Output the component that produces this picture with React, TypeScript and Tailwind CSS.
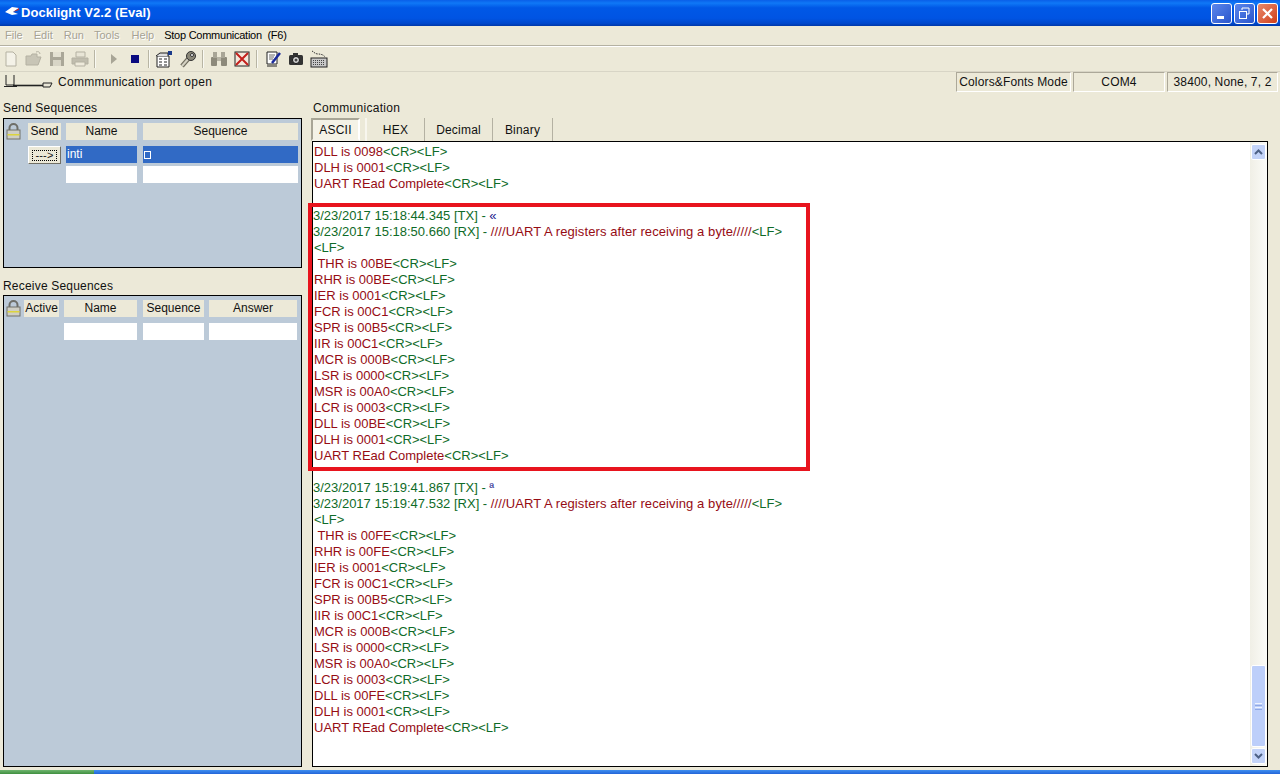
import type { ReactNode } from "react";

type Seg = { t: string; c: "r" | "w" | "g" | "t" | "b" };
const R = (t: string): Seg => ({ t, c: "r" });
const W = (t: string): Seg => ({ t, c: "w" });
const G = (t: string): Seg => ({ t, c: "g" });
const T = (t: string): Seg => ({ t, c: "t" });
const B = (t: string): Seg => ({ t, c: "b" });

const colorClass = {
  r: "text-[#960c14]",
  w: "text-[#960c14] tracking-[0.1px]",
  g: "text-[#0f6b28]",
  t: "text-[#0f6b28] -ml-px",
  b: "text-[#1a1a8c]",
};

const reg = (s: string): Seg[] => [R(s), G("<CR><LF>")];

const block = (thr: string, dll: string): Seg[][] => [
  [G("<LF>")],
  reg(` THR is ${thr}`),
  reg(`RHR is ${thr}`),
  reg("IER is 0001"),
  reg("FCR is 00C1"),
  reg("SPR is 00B5"),
  reg("IIR is 00C1"),
  reg("MCR is 000B"),
  reg("LSR is 0000"),
  reg("MSR is 00A0"),
  reg("LCR is 0003"),
  reg(`DLL is ${dll}`),
  reg("DLH is 0001"),
  reg("UART REad Complete"),
];

const log: Seg[][] = [
  reg("DLL is 0098"),
  reg("DLH is 0001"),
  reg("UART REad Complete"),
  [],
  [T("3/23/2017 15:18:44.345 [TX] - "), B("«")],
  [T("3/23/2017 15:18:50.660 [RX] - "), W("////UART A registers after receiving a byte/////"), G("<LF>")],
  ...block("00BE", "00BE"),
  [],
  [T("3/23/2017 15:19:41.867 [TX] - "), B("ª")],
  [T("3/23/2017 15:19:47.532 [RX] - "), W("////UART A registers after receiving a byte/////"), G("<LF>")],
  ...block("00FE", "00FE"),
];

function Ico({ w = 18, className = "", children }: { w?: number; className?: string; children: ReactNode }) {
  return (
    <svg width={w} height={18} viewBox={`0 0 ${w} 18`} className={`shrink-0 ${className}`}>
      {children}
    </svg>
  );
}

function ToolSep({ className = "" }: { className?: string }) {
  return <div className={`w-[2px] h-[18px] border-l border-[#b8b5a4] bg-white/70 shrink-0 ${className}`} />;
}

function Toolbar() {
  const off = "#b4b1a2";
  return (
    <div className="h-[25px] flex items-center pl-[2px] gap-[5px] shrink-0">
      <Ico>
        <path d="M4 2h7l3 3v11H4z" fill="#f4f2e8" stroke={off} />
      </Ico>
      <Ico>
        <path d="M1 15V6h5l1-2h5v3h4l-3 8z" fill="#c8c5b6" stroke={off} />
        <path d="M11 2c2-1 4 0 4 2" fill="none" stroke={off} />
      </Ico>
      <Ico>
        <rect x="2" y="2" width="14" height="14" fill="#aaa798" />
        <rect x="5" y="2" width="8" height="5" fill="#e4e1d2" />
        <rect x="5" y="10" width="8" height="6" fill="#d8d5c6" />
      </Ico>
      <Ico>
        <path d="M5 2h9v5H5z" fill="#e8e5d6" stroke={off} />
        <path d="M1 8h16v6H1z" fill="#c0bdae" stroke={off} />
        <path d="M4 12h10v4H4z" fill="#eeeadb" stroke={off} />
      </Ico>
      <ToolSep />
      <Ico w={12} className="ml-[7px]">
        <path d="M3 4l6 5-6 5z" fill="#a8a596" />
      </Ico>
      <Ico w={12} className="ml-[4px]">
        <rect x="2" y="5" width="8" height="8" fill="#0a0a80" />
      </Ico>
      <ToolSep className="ml-[2px]" />
      <Ico>
        <path d="M2 6h12v11H2z" fill="#fff" stroke="#222" />
        <path d="M4 9h3M4 12h3M4 15h3M9 9h3M9 12h3M9 15h3" stroke="#222" />
        <path d="M1 6l4-3h8v3" fill="#ddd" stroke="#222" />
        <rect x="13" y="1" width="4" height="4" fill="#1a3a8a" />
      </Ico>
      <Ico className="ml-[1px]">
        <path d="M3 16l7-8" stroke="#6f6c5e" strokeWidth="4.5" />
        <path d="M3 16l7-8" stroke="#d4d1c2" strokeWidth="2" />
        <circle cx="12" cy="6" r="4.5" fill="#8a8778" stroke="#333" />
        <circle cx="13" cy="5" r="1.5" fill="#fff" stroke="#333" />
      </Ico>
      <ToolSep />
      <Ico className="ml-[1px]">
        <rect x="1" y="7" width="6" height="9" rx="1" fill="#8d8a7b" />
        <rect x="11" y="7" width="6" height="9" rx="1" fill="#8d8a7b" />
        <rect x="3" y="2" width="4" height="6" fill="#a8a596" />
        <rect x="11" y="2" width="4" height="6" fill="#a8a596" />
        <rect x="7" y="7" width="4" height="4" fill="#b8b5a6" />
      </Ico>
      <Ico>
        <rect x="2" y="2" width="14" height="14" fill="#f4e8dc" stroke="#222" />
        <path d="M3 3l12 12M15 3L3 15" stroke="#c4201c" strokeWidth="2" />
      </Ico>
      <ToolSep />
      <Ico className="ml-[1px]">
        <path d="M3 2h10v12H3z" fill="#fff" stroke="#222" />
        <path d="M5 5h6M5 7h5M5 9h4" stroke="#666" />
        <path d="M8 13l8-10" stroke="#1a2a9a" strokeWidth="2.5" />
        <path d="M3 16h10" stroke="#222" />
      </Ico>
      <Ico>
        <rect x="2" y="5" width="14" height="10" rx="1.5" fill="#333" />
        <rect x="6" y="3" width="5" height="3" fill="#333" />
        <circle cx="9" cy="10" r="3.5" fill="#ddd" stroke="#111" />
        <circle cx="9" cy="10" r="1.5" fill="#444" />
      </Ico>
      <Ico>
        <path d="M2 1c2 1 3 3 6 3s6 1 7 3" fill="none" stroke="#333" strokeDasharray="1.5 1" />
        <rect x="1" y="8" width="16" height="9" fill="#c8c8c8" stroke="#222" />
        <path d="M3 10.5h12M3 12.5h12M3 14.5h12" stroke="#444" strokeDasharray="1 1" />
      </Ico>
    </div>
  );
}

function TitleButton({ close, children }: { close?: boolean; children: ReactNode }) {
  return (
    <div
      className={`w-[21px] h-[21px] rounded-[3px] border border-white flex items-center justify-center ${
        close ? "bg-gradient-to-br from-[#e8886a] to-[#d03c12]" : "bg-gradient-to-br from-[#5c86ec] to-[#2a55cc]"
      }`}
    >
      {children}
    </div>
  );
}

function TitleBar() {
  return (
    <div className="h-[26px] shrink-0 flex items-center pl-[5px] pr-[2px] bg-[linear-gradient(180deg,#0a5fe8_0%,#0f78f6_12%,#0058e6_30%,#0054e3_70%,#0048cc_90%,#0038a8_100%)]">
      <svg width="14" height="12" viewBox="0 0 14 12" className="shrink-0 -mt-[3px]">
        <path d="M0 6L7 1l7 1-6 4 5 2-6 1z" fill="#fff" />
        <path d="M8 6l6-4v2z" fill="#c03030" />
      </svg>
      <span className="ml-[2px] text-white font-bold text-[13px] tracking-[0.05px]">Docklight V2.2 (Eval)</span>
      <div className="ml-auto flex gap-[2px]">
        <TitleButton>
          <div className="w-[7px] h-[3px] bg-white mt-[8px] -ml-[3px]" />
        </TitleButton>
        <TitleButton>
          <svg width="13" height="13" viewBox="0 0 13 13" fill="none" stroke="#fff">
            <path d="M4 3V1h7v6H9" />
            <rect x="1.5" y="4.5" width="7" height="7" />
          </svg>
        </TitleButton>
        <TitleButton close>
          <svg width="13" height="13" viewBox="0 0 13 13" stroke="#fff" strokeWidth="2.2">
            <path d="M2 2l9 9M11 2l-9 9" />
          </svg>
        </TitleButton>
      </div>
    </div>
  );
}

function MenuBar() {
  const grey = "text-[#a5a294] [text-shadow:1px_1px_0_#fff]";
  return (
    <div className="h-[20px] shrink-0 flex items-center text-[11px] border-b border-[#b4b1a2] shadow-[0_1px_0_#fff]">
      <span className={`ml-[5px] ${grey}`}>File</span>
      <span className={`ml-[11px] ${grey}`}>Edit</span>
      <span className={`ml-[11px] ${grey}`}>Run</span>
      <span className={`ml-[10px] ${grey}`}>Tools</span>
      <span className={`ml-[12px] ${grey}`}>Help</span>
      <span className="ml-[10px] text-black whitespace-pre tracking-[-0.25px]">Stop Communication  (F6)</span>
    </div>
  );
}

function StatusCell({ w, children }: { w: string; children: ReactNode }) {
  return (
    <div className={`${w} h-[20px] flex items-center justify-center border border-[#aca899] border-r-white border-b-white whitespace-nowrap`}>
      {children}
    </div>
  );
}

function StatusRow() {
  return (
    <div className="h-[21px] shrink-0 flex items-center text-[12px] tracking-[0.15px] border-t border-[#d8d5c6] pr-[2px]">
      <svg width="50" height="16" viewBox="0 0 50 16" className="ml-[3px] shrink-0" fill="none" stroke="#222">
        <path d="M3 1v10h8V1M1 12.5h13" />
        <path d="M10 11.5h30" strokeWidth="1.6" />
        <path d="M40 9h9l-2 4h-7z" fill="#e8e5d6" />
      </svg>
      <span className="ml-[5px] tracking-[0.28px]">Commmunication port open</span>
      <div className="ml-auto flex gap-[2px] text-[#111]">
        <StatusCell w="w-[115px]">Colors&amp;Fonts Mode</StatusCell>
        <StatusCell w="w-[92px]">COM4</StatusCell>
        <StatusCell w="w-[111px]">38400, None, 7, 2</StatusCell>
      </div>
    </div>
  );
}

function Lock() {
  return (
    <svg width="15" height="17" viewBox="0 0 15 17" className="shrink-0">
      <path d="M3.5 8V5a4 4 0 018 0v3" fill="none" stroke="#6e6e68" strokeWidth="2" />
      <rect x="1" y="7" width="13" height="9" fill="#cfcec4" stroke="#707068" />
      <rect x="1.5" y="11" width="12" height="1.5" fill="#dcd43c" />
    </svg>
  );
}

function Head({ w, ml, children }: { w: string; ml: string; children: ReactNode }) {
  return <div className={`${w} ${ml} h-[17px] pb-[2px] flex items-center justify-center bg-[#ece9d8] shrink-0`}>{children}</div>;
}

function SendPanel() {
  return (
    <>
      <div className="h-[26px] flex items-end pb-[1px] tracking-[0.2px]">Send Sequences</div>
      <div className="h-[150px] border border-black bg-[#bccad8] shrink-0 pt-[4px]">
        <div className="flex items-start">
          <div className="ml-[2px] w-[22px]">
            <Lock />
          </div>
          <Head w="w-[33px]" ml="ml-0">Send</Head>
          <Head w="w-[71px]" ml="ml-[5px]">Name</Head>
          <Head w="w-[155px]" ml="ml-[6px]">Sequence</Head>
        </div>
        <div className="flex mt-[6px] h-[17px]">
          <div className="ml-[24px] w-[33px] h-[18px] bg-[#ece9d8] border border-white border-r-[#716f64] border-b-[#716f64] flex items-center justify-center shrink-0">
            <span className="w-[25px] h-[11px] border border-dotted border-black text-[11px] leading-[8px] flex justify-center tracking-[0.2px]">---&gt;</span>
          </div>
          <div className="ml-[5px] w-[71px] bg-[#316ac5] text-white pl-[1px] leading-[17px] shrink-0">inti</div>
          <div className="ml-[6px] w-[155px] bg-[#316ac5] flex items-center pl-[1px] shrink-0">
            <div className="w-[7px] h-[8px] border border-white" />
          </div>
        </div>
        <div className="flex mt-[3px] h-[17px]">
          <div className="ml-[62px] w-[71px] bg-white" />
          <div className="ml-[6px] w-[155px] bg-white" />
        </div>
      </div>
    </>
  );
}

function ReceivePanel() {
  return (
    <>
      <div className="h-[27px] flex items-end tracking-[0.2px]">Receive Sequences</div>
      <div className="h-[472px] border border-black bg-[#bccad8] shrink-0 pt-[4px]">
        <div className="flex items-start">
          <div className="ml-[2px] w-[18px]">
            <Lock />
          </div>
          <Head w="w-[35px]" ml="ml-0">Active</Head>
          <Head w="w-[73px]" ml="ml-[5px]">Name</Head>
          <Head w="w-[61px]" ml="ml-[6px]">Sequence</Head>
          <Head w="w-[88px]" ml="ml-[5px]">Answer</Head>
        </div>
        <div className="flex mt-[6px] h-[17px]">
          <div className="ml-[60px] w-[73px] bg-white" />
          <div className="ml-[6px] w-[61px] bg-white" />
          <div className="ml-[5px] w-[88px] bg-white" />
        </div>
      </div>
    </>
  );
}

function Tabs() {
  return (
    <div className="h-[23px] flex shrink-0 -ml-[1px] tracking-[0.2px]">
      <div className="w-[49px] h-[23px] flex items-center justify-center border-2 border-[#a8a596] border-r-white border-b-[#f4f2e8] bg-[#f4f2e6]">ASCII</div>
      <div className="ml-[5px] w-[60px] flex items-center justify-center border-l-2 border-r border-l-[#f8f6ee] border-r-[#b4b1a2]">HEX</div>
      <div className="w-[68px] flex items-center justify-center border-r border-[#b4b1a2]">Decimal</div>
      <div className="w-[60px] flex items-center justify-center border-r border-[#b4b1a2]">Binary</div>
    </div>
  );
}

function Chevron({ up }: { up?: boolean }) {
  return (
    <svg width="9" height="6" viewBox="0 0 9 6" fill="none" stroke="#4d6185" strokeWidth="2">
      <path d={up ? "M1 5l3.5-3.5L8 5" : "M1 1l3.5 3.5L8 1"} />
    </svg>
  );
}

function Scrollbar() {
  const btn = "h-[16px] mx-[1px] rounded-[2px] border border-white bg-[#c3d3f8] flex items-center justify-center shrink-0";
  return (
    <div className="w-[17px] flex flex-col py-[2px] bg-[linear-gradient(90deg,#f0efe6,#fbfbf7)] shrink-0">
      <div className={btn}>
        <Chevron up />
      </div>
      <div className="flex-1" />
      <div className="h-[82px] mx-[1px] rounded-[2px] border border-white bg-[#bdcffa] flex flex-col items-center justify-center gap-[1px] shrink-0">
        <div className="w-[7px] h-px bg-[#eef3fe]" />
        <div className="w-[7px] h-px bg-[#8fa8e4]" />
        <div className="w-[7px] h-px bg-[#eef3fe]" />
        <div className="w-[7px] h-px bg-[#8fa8e4]" />
      </div>
      <div className={`${btn} mt-px`}>
        <Chevron />
      </div>
    </div>
  );
}

export default function App() {
  return (
    <div className="w-[1280px] h-[774px] overflow-hidden flex flex-col bg-[#ece9d8] text-[12px] text-[#111] font-['Liberation_Sans',Arial,sans-serif]">
      <TitleBar />
      <MenuBar />
      <Toolbar />
      <StatusRow />
      <div className="flex-1 flex min-h-0 relative">
        <div className="ml-[3px] w-[299px] shrink-0 flex flex-col">
          <SendPanel />
          <ReceivePanel />
        </div>
        <div className="ml-[10px] w-[956px] flex flex-col">
          <div className="h-[26px] flex items-end pb-[1px] pl-px tracking-[0.3px] shrink-0">Communication</div>
          <Tabs />
          <div className="h-[626px] border border-black bg-white flex min-h-0 shrink-0">
            <div className="flex-1 pt-[2px] overflow-hidden text-[13px]">
              {log.map((line, i) => (
                <div key={i} className="h-[16px] leading-[16px] whitespace-pre pl-px">
                  {line.map((s, j) => (
                    <span key={j} className={colorClass[s.c]}>
                      {s.t}
                    </span>
                  ))}
                </div>
              ))}
            </div>
            <Scrollbar />
          </div>
        </div>
        {/* red annotation drawn over the log */}
        <div className="absolute left-[308px] top-[111px] w-[502px] h-[268px] border-[4px] border-[#e8141e] pointer-events-none" />
      </div>
      <div className="h-[4px] shrink-0 flex">
        <div className="w-[94px] bg-gradient-to-b from-[#6fb56f] to-[#3f8f3f]" />
        <div className="flex-1 bg-gradient-to-b from-[#3f8ff0] to-[#2464d8]" />
      </div>
    </div>
  );
}
